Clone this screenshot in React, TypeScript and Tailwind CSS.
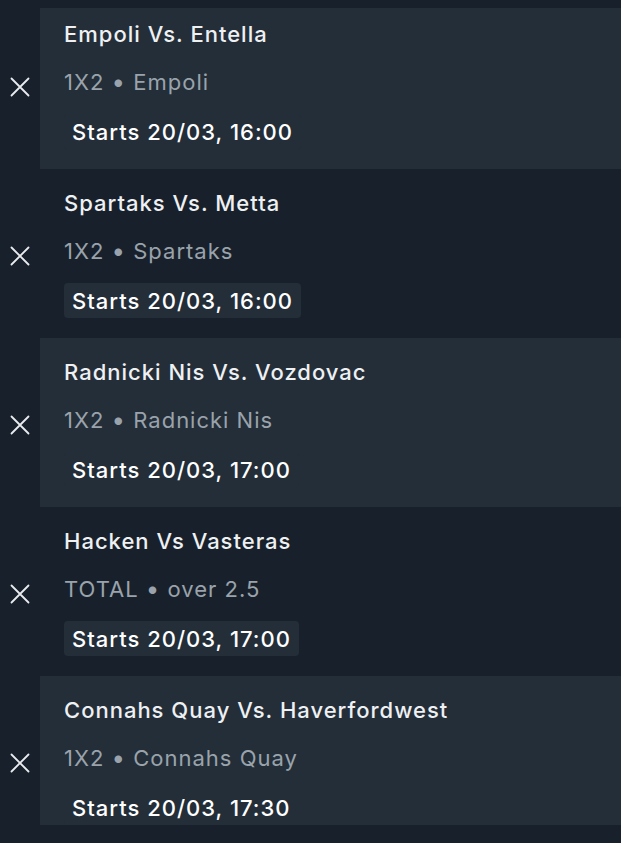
import { Fragment } from 'react'

type Bet = {
  match: string
  market: string
  pick: string
  starts: string
}

const bets: Bet[] = [
  { match: 'Empoli Vs. Entella', market: '1X2', pick: 'Empoli', starts: 'Starts 20/03, 16:00' },
  { match: 'Spartaks Vs. Metta', market: '1X2', pick: 'Spartaks', starts: 'Starts 20/03, 16:00' },
  { match: 'Radnicki Nis Vs. Vozdovac', market: '1X2', pick: 'Radnicki Nis', starts: 'Starts 20/03, 17:00' },
  { match: 'Hacken Vs Vasteras', market: 'TOTAL', pick: 'over 2.5', starts: 'Starts 20/03, 17:00' },
  { match: 'Connahs Quay Vs. Haverfordwest', market: '1X2', pick: 'Connahs Quay', starts: 'Starts 20/03, 17:30' },
]

function CloseIcon() {
  return (
    <svg width="20" height="20" viewBox="0 0 20 20" fill="none" className="text-[#e9ecef]">
      <path d="M1.5 1.5 18.5 18.5M18.5 1.5 1.5 18.5" stroke="currentColor" strokeWidth="1.8" strokeLinecap="round" />
    </svg>
  )
}

function BetRow({ bet, shaded }: { bet: Bet; shaded: boolean }) {
  return (
    <div className="flex h-[169px] shrink-0">
      <div className="w-10 flex items-center justify-center pt-1">
        <CloseIcon />
      </div>
      <div className={`flex-1 flex flex-col pl-6 pt-5 tracking-[1px] ${shaded ? 'bg-[#232e39]' : ''}`}>
        <div className="text-[22px] leading-7 font-medium text-[#eef0f2] whitespace-nowrap">{bet.match}</div>
        <div className="mt-5 h-7 text-[22px] leading-7 text-[#9aa3ab] whitespace-nowrap">
          {bet.market} <span className="text-[24px] leading-none">&bull;</span> {bet.pick}
        </div>
        <div className="mt-[18px] flex">
          <span className="h-[35px] flex items-center px-2 rounded bg-[#232e39] text-[22px] leading-7 font-medium text-white whitespace-nowrap">
            {bet.starts}
          </span>
        </div>
      </div>
    </div>
  )
}

export default function App() {
  return (
    <div
      className="relative h-[843px] w-[621px] overflow-hidden bg-[#18212b] flex flex-col"
      style={{ fontFamily: 'Inter, "Noto Sans", sans-serif' }}
    >
      {bets.map((bet, i) => (
        <Fragment key={i}>
          <BetRow bet={bet} shaded={i % 2 === 0} />
        </Fragment>
      ))}
      {/* scroll area edges */}
      <div className="absolute top-0 inset-x-0 h-2 bg-[#18212b]" />
      <div className="absolute bottom-0 inset-x-0 h-[18px] bg-[#18212b]" />
    </div>
  )
}
